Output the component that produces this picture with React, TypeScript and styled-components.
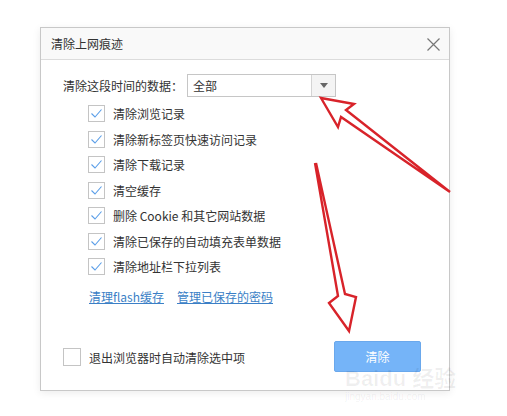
import { createGlobalStyle } from "styled-components";
import styled from "styled-components";

const Global = createGlobalStyle`
  html, body {
    margin: 0;
    background: #fff;
    font-family: "Microsoft YaHei", "Noto Sans CJK SC", sans-serif;
    color: #333;
  }
`;

const items = [
  "清除浏览记录",
  "清除新标签页快速访问记录",
  "清除下载记录",
  "清空缓存",
  "删除 Cookie 和其它网站数据",
  "清除已保存的自动填充表单数据",
  "清除地址栏下拉列表",
];

function Check() {
  return (
    <svg width="13" height="13" viewBox="0 0 13 13">
      <path d="M1.5 6.5 L5 10 L11.5 2.5" fill="none" stroke="#5a9ee8" strokeWidth="1.1" />
    </svg>
  );
}

export default function App() {
  return (
    <Page>
      <Global />
      <Dialog>
        <Header>
          <span>清除上网痕迹</span>
          <Close>
            <svg width="13" height="13" viewBox="0 0 13 13">
              <path d="M0.5 0.5 L12.5 12.5 M12.5 0.5 L0.5 12.5" stroke="#777" strokeWidth="1.2" />
            </svg>
          </Close>
        </Header>
        <Body>
          <TimeRow>
            <span>清除这段时间的数据：</span>
            <Select>
              <SelectText>全部</SelectText>
              <SelectArrow>
                <svg width="8" height="5" viewBox="0 0 8 5">
                  <path d="M0 0 H8 L4 5 Z" fill="#666" />
                </svg>
              </SelectArrow>
            </Select>
          </TimeRow>
          <List>
            {items.map((t) => (
              <Row key={t}>
                <Box>
                  <Check />
                </Box>
                <span>{t}</span>
              </Row>
            ))}
          </List>
          <Links>
            <Link>清理flash缓存</Link>
            <Link>管理已保存的密码</Link>
          </Links>
        </Body>
        <Footer>
          <Row>
            <Box $big />
            <span>退出浏览器时自动清除选中项</span>
          </Row>
          <ClearButton>清除</ClearButton>
        </Footer>
      </Dialog>
      <Watermark>
        <b>Bai</b>du 经验
        <small>jingyan.baidu.com</small>
      </Watermark>
      <Arrows width="507" height="416" viewBox="0 0 507 416">
        <g fill="none" stroke="#d8232a" strokeWidth="2.4" strokeLinejoin="miter">
          <path d="M321 98 L354 104 L346 110 L450 192 L341 117 L338 127 Z" />
          <path d="M315 163 L338 296 L329 303 L349 331 L356 297 L345 294 L316 163" />
        </g>
      </Arrows>
    </Page>
  );
}

const Page = styled.div`
  position: relative;
  width: 507px;
  height: 416px;
  overflow: hidden;
  padding: 27px 0 0 40px;
  box-sizing: border-box;
`;

const Dialog = styled.div`
  width: 410px;
  height: 364px;
  box-sizing: border-box;
  border: 1px solid #c8c8c8;
  box-shadow: 0 2px 8px rgba(0, 0, 0, 0.08);
  background: #fff;
  display: flex;
  flex-direction: column;
  font-size: 12px;
`;

const Header = styled.div`
  height: 31px;
  border-bottom: 1px solid #dcdcdc;
  background: #f9f9f9;
  display: flex;
  align-items: center;
  justify-content: space-between;
  padding: 0 9px 0 10px;
  font-size: 12px;
  color: #333;
`;

const Close = styled.div`
  display: flex;
  margin-top: 1px;
`;

const Body = styled.div`
  padding: 14px 0 0 22px;
  display: flex;
  flex-direction: column;
`;

const TimeRow = styled.div`
  display: flex;
  align-items: center;
  gap: 4px;
  height: 23px;
`;

const Select = styled.div`
  width: 149px;
  height: 23px;
  box-sizing: border-box;
  border: 1px solid #c6c6c6;
  display: flex;
`;

const SelectText = styled.div`
  flex: 1;
  padding-left: 5px;
  line-height: 21px;
`;

const SelectArrow = styled.div`
  width: 23px;
  border-left: 1px solid #d4d4d4;
  background: #f4f4f4;
  display: flex;
  align-items: center;
  justify-content: center;
`;

const List = styled.div`
  display: flex;
  flex-direction: column;
  padding: 4px 0 0 25px;
`;

const Row = styled.div`
  display: flex;
  align-items: center;
  gap: 8px;
  height: 25.5px;
  color: #333;
`;

const Box = styled.div<{ $big?: boolean }>`
  width: ${(p) => (p.$big ? 18 : 17)}px;
  height: ${(p) => (p.$big ? 18 : 17)}px;
  box-sizing: border-box;
  border: 1px solid #c4c4c4;
  background: #fff;
  display: flex;
  align-items: center;
  justify-content: center;
`;

const Links = styled.div`
  display: flex;
  gap: 13px;
  padding: 8px 0 0 26px;
`;

const Link = styled.a`
  color: #3b7fc6;
  text-decoration: underline;
  cursor: pointer;
`;

const Footer = styled.div`
  margin-top: auto;
  display: flex;
  align-items: center;
  justify-content: space-between;
  padding: 0 28px 17px 22px;
`;

const ClearButton = styled.button`
  width: 87px;
  height: 31px;
  border: 1px solid #6aa8ec;
  border-radius: 2px;
  background: #75b4f8;
  color: #fff;
  font-family: inherit;
  font-size: 12px;
  margin-bottom: 1px;
`;

const Watermark = styled.div`
  position: absolute;
  left: 345px;
  top: 368px;
  color: rgba(0, 0, 0, 0.06);
  font-family: "Liberation Sans", "Noto Sans CJK SC", sans-serif;
  font-size: 22px;
  font-weight: bold;
  line-height: 1;
  small {
    display: block;
    font-size: 10px;
    font-weight: normal;
    margin-top: 2px;
  }
`;

const Arrows = styled.svg`
  position: absolute;
  left: 0;
  top: 0;
  pointer-events: none;
`;
